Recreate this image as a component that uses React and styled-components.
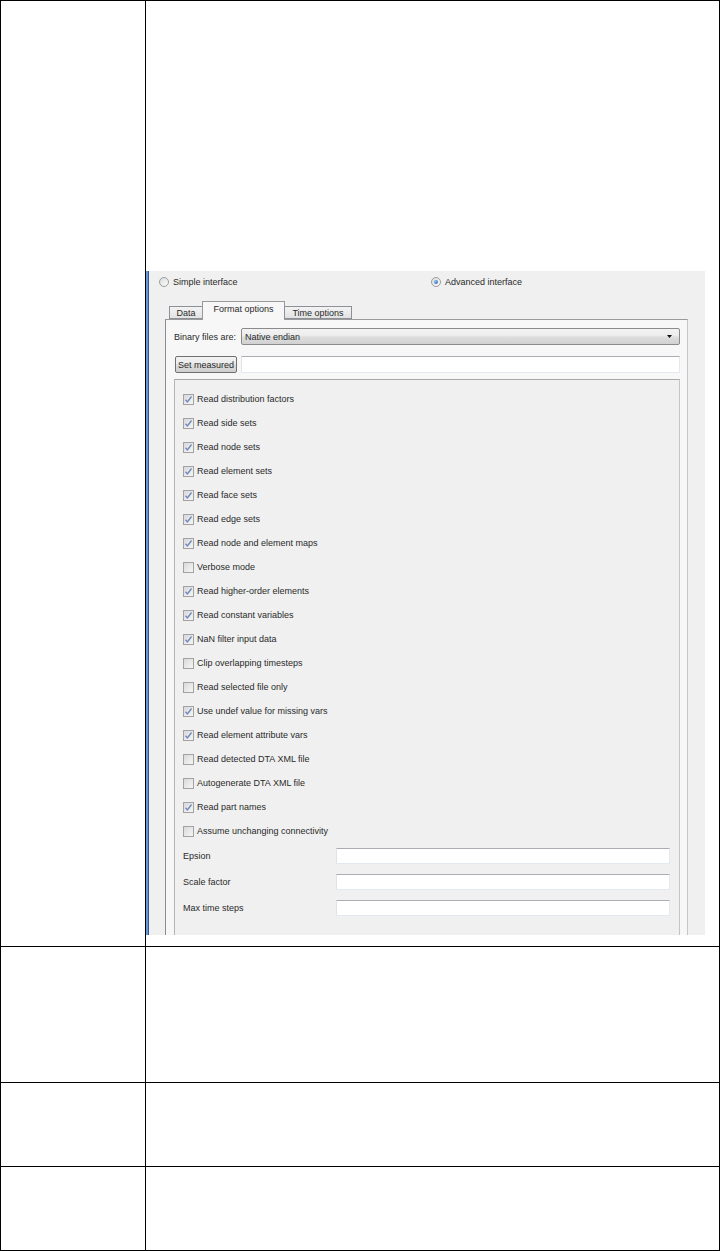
import React from 'react';
import styled, { createGlobalStyle } from 'styled-components';

const GlobalStyle = createGlobalStyle`
    html, body {
        margin: 0;
        padding: 0;
        background: #fff;
    }
    body {
        font-family: "Liberation Sans", Arial, sans-serif;
    }
`

const Table = styled.div`
    width: 720px;
    box-sizing: border-box;
    border: 1px solid #000;
    border-bottom: none;
`

const Row = styled.div`
    display: grid;
    grid-template-columns: 145px 1fr;
    height: ${p => p.h}px;
    border-bottom: 1px solid #000;
`

const LabelCell = styled.div`
    border-right: 1px solid #000;
`

const ContentCell = styled.div`
    min-width: 0;
`

const Dialog = styled.div`
    margin-top: 270px;
    width: 559px;
    height: 664px;
    overflow: hidden;
    box-sizing: border-box;
    background: linear-gradient(to right, #6a98d6 0 2px, #35568a 2px 3px, #f0f0f0 3px);
    font-size: 9px;
    color: #2a2a2a;
`

const RadioRow = styled.div`
    display: flex;
    align-items: center;
    height: 22px;
    padding-left: 13px;
`

const RadioOption = styled.label`
    display: flex;
    align-items: center;
    width: ${p => p.w ? `${p.w}px` : 'auto'};
    gap: 4px;
    white-space: nowrap;
`

const RadioDot = styled.span`
    position: relative;
    width: 10px;
    height: 10px;
    box-sizing: border-box;
    border-radius: 50%;
    border: 1px solid #9a9c9e;
    background: linear-gradient(135deg, #dcdcdc, #fbfbfb);
    &::after {
        content: '';
        display: ${p => p.on ? 'block' : 'none'};
        position: absolute;
        left: 2px;
        top: 2px;
        width: 4px;
        height: 4px;
        border-radius: 50%;
        background: radial-gradient(circle at 35% 35%, #8cc0f0, #1f5aa6);
    }
`

const TabBar = styled.div`
    display: flex;
    align-items: flex-end;
    height: 18px;
    margin: 8px 0 0 23px;
    position: relative;
    z-index: 1;
`

const Tab = styled.div`
    box-sizing: border-box;
    width: ${p => p.w}px;
    height: ${p => p.active ? 19 : 13}px;
    margin-left: -1px;
    margin-bottom: ${p => p.active ? -1 : 0}px;
    border: 1px solid ${p => p.active ? '#9a9a9a' : '#8e9097'};
    border-bottom: ${p => p.active ? 'none' : '1px solid #8e9097'};
    background: ${p => p.active ? '#f7f7f7' : 'linear-gradient(#f3f3f3, #e2e2e2)'};
    display: flex;
    align-items: center;
    justify-content: center;
    padding-bottom: ${p => p.active ? 4 : 0}px;
    white-space: nowrap;
    &:first-child {
        margin-left: 0;
    }
`

const Pane = styled.div`
    margin-left: 19px;
    width: 523px;
    height: 700px;
    box-sizing: border-box;
    border: 1px solid #9a9a9a;
    border-left-color: #8b8b8f;
    border-right-color: #c6c6c6;
    background: #f7f7f7;
    padding: 8px 7px 0 8px;
`

const FieldRow = styled.div`
    display: grid;
    grid-template-columns: 67px 1fr;
    align-items: center;
    height: 17px;
    margin-top: ${p => p.mt || 0}px;
`

const Combo = styled.div`
    height: 17px;
    box-sizing: border-box;
    border: 1px solid #8a8a8a;
    border-radius: 2px;
    background: linear-gradient(#f3f3f3, #ececec 45%, #dedede 52%, #d1d1d1);
    display: flex;
    align-items: center;
    justify-content: space-between;
    padding: 0 7px 0 3px;
`

const Button = styled.div`
    width: 62px;
    height: 17px;
    margin-left: 1px;
    box-sizing: border-box;
    border: 1px solid #707070;
    border-radius: 2px;
    background: linear-gradient(#f3f3f3, #ebebeb 45%, #dddddd 52%, #cfcfcf);
    display: flex;
    align-items: center;
    justify-content: center;
    white-space: nowrap;
`

const LineEdit = styled.div`
    height: ${p => p.h || 17}px;
    box-sizing: border-box;
    background: #fff;
    border: 1px solid #e3e9ef;
    border-top-color: #abadb3;
    border-left-color: #e2e3ea;
`

const Frame = styled.div`
    margin-top: 6px;
    height: 600px;
    box-sizing: border-box;
    border: 1px solid #c4c4c4;
    border-top-color: #a8a8a8;
    border-left-color: #b4b4b4;
    background: #f0f0f0;
    padding: 7px 8px 0 8px;
`

const CheckRow = styled.label`
    display: flex;
    align-items: center;
    height: 24px;
    gap: 3px;
    white-space: nowrap;
`

const Box = styled.span`
    width: 11px;
    height: 11px;
    box-sizing: border-box;
    border: 1px solid #a2a2a2;
    background: linear-gradient(135deg, #d9d9d9, #f6f6f6);
    display: flex;
    align-items: center;
    justify-content: center;
    flex-shrink: 0;
`

const ValueRow = styled.div`
    display: grid;
    grid-template-columns: 153px 1fr;
    align-items: center;
    height: 26px;
    padding-right: 1px;
`

function Check ({ on }) {
    return (
        <Box>
            {on ? (
                <svg width="9" height="9" viewBox="0 0 9 9">
                    <path d="M1.5 4.8 L3.5 7 L7.5 1.5" fill="none" stroke="#6d8bbd" strokeWidth="1.4" />
                </svg>
            ) : null}
        </Box>
    )
}

const options = [
    ['Read distribution factors', true],
    ['Read side sets', true],
    ['Read node sets', true],
    ['Read element sets', true],
    ['Read face sets', true],
    ['Read edge sets', true],
    ['Read node and element maps', true],
    ['Verbose mode', false],
    ['Read higher-order elements', true],
    ['Read constant variables', true],
    ['NaN filter input data', true],
    ['Clip overlapping timesteps', false],
    ['Read selected file only', false],
    ['Use undef value for missing vars', true],
    ['Read element attribute vars', true],
    ['Read detected DTA XML file', false],
    ['Autogenerate DTA XML file', false],
    ['Read part names', true],
    ['Assume unchanging connectivity', false],
]

const values = ['Epsion', 'Scale factor', 'Max time steps']

function App () {
    return (
        <>
            <GlobalStyle />
            <Table>
                <Row h={945}>
                    <LabelCell />
                    <ContentCell>
                        <Dialog>
                            <RadioRow>
                                <RadioOption w={272}><RadioDot />Simple interface</RadioOption>
                                <RadioOption><RadioDot on />Advanced interface</RadioOption>
                            </RadioRow>
                            <TabBar>
                                <Tab w={34}>Data</Tab>
                                <Tab w={83} active>Format options</Tab>
                                <Tab w={68}>Time options</Tab>
                            </TabBar>
                            <Pane>
                                <FieldRow>
                                    <span>Binary files are:</span>
                                    <Combo>
                                        <span>Native endian</span>
                                        <svg width="5" height="3" viewBox="0 0 5 3">
                                            <path d="M0 0 H5 L2.5 3 Z" fill="#111" />
                                        </svg>
                                    </Combo>
                                </FieldRow>
                                <FieldRow mt={11}>
                                    <Button>Set measured</Button>
                                    <LineEdit />
                                </FieldRow>
                                <Frame>
                                    {options.map(([label, on]) => (
                                        <CheckRow key={label}>
                                            <Check on={on} />
                                            <span>{label}</span>
                                        </CheckRow>
                                    ))}
                                    {values.map(label => (
                                        <ValueRow key={label}>
                                            <span>{label}</span>
                                            <LineEdit h={16} />
                                        </ValueRow>
                                    ))}
                                </Frame>
                            </Pane>
                        </Dialog>
                    </ContentCell>
                </Row>
                <Row h={135}>
                    <LabelCell />
                    <ContentCell />
                </Row>
                <Row h={83}>
                    <LabelCell />
                    <ContentCell />
                </Row>
                <Row h={83}>
                    <LabelCell />
                    <ContentCell />
                </Row>
            </Table>
        </>
    )
}

export default App
